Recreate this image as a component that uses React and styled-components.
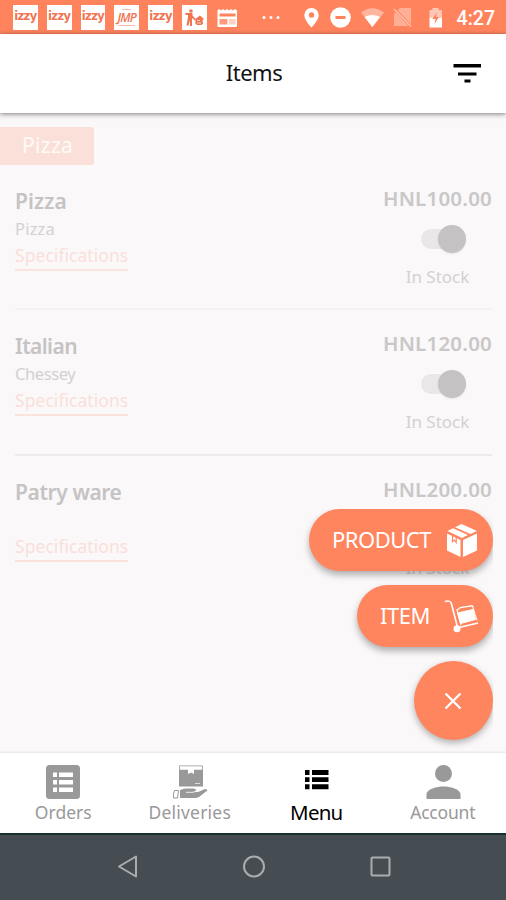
import styled, { createGlobalStyle } from 'styled-components'

const GlobalStyle = createGlobalStyle`
  * {
    box-sizing: border-box;
  }

  body {
    margin: 0;
    font-family: 'Noto Sans', 'Open Sans', sans-serif;
  }
`

const Screen = styled.div`
  position: relative;
  width: 506px;
  height: 900px;
  display: flex;
  flex-direction: column;
  overflow: hidden;
  background: #faf8f9;
`

const StatusBar = styled.div`
  height: 34px;
  flex: none;
  display: flex;
  align-items: center;
  padding: 0 11px 0 13px;
  background: #ff845e;
  color: white;
`

const Notifications = styled.div`
  display: flex;
  align-items: center;
  gap: 9px;
  flex: 1;
`

const AppBadge = styled.div`
  width: 24.8px;
  height: 25px;
  display: flex;
  flex-direction: column;
  align-items: center;
  justify-content: center;
  background: white;
  color: #f07450;
  overflow: hidden;
`

const BadgeText = styled.span`
  font-family: ${props => (props.$italic ? "'Open Sans'" : "'DejaVu Sans'")}, sans-serif;
  font-size: ${props => (props.$italic ? '12px' : '11.5px')};
  font-style: ${props => (props.$italic ? 'italic' : 'normal')};
  font-weight: ${props => (props.$italic ? 600 : 700)};
  line-height: 13px;
  letter-spacing: ${props => (props.$italic ? '-0.8px' : '-0.6px')};
  margin-top: ${props => (props.$italic ? '0' : '-2px')};
`

const BadgeRule = styled.div`
  width: ${props => props.$width};
  height: 1px;
  background: #f9b8a4;
  margin: 1px 0;
`

const StatusIcons = styled.div`
  display: flex;
  align-items: center;
`

const Clock = styled.span`
  font-family: Roboto, sans-serif;
  font-weight: 500;
  font-size: 19.5px;
  line-height: 34px;
  margin-left: 14px;
  padding-top: 3px;
`

const Header = styled.header`
  position: relative;
  height: 79px;
  flex: none;
  display: grid;
  grid-template-columns: 1fr auto 1fr;
  align-items: center;
  padding: 0 25px;
  background: white;
  box-shadow: 0 1px 5px rgba(0, 0, 0, 0.5);
`

const HeaderTitle = styled.h1`
  grid-column: 2;
  margin: 0 0 4px 2px;
  font-size: 22px;
  font-weight: 400;
  line-height: 30px;
  letter-spacing: -0.5px;
  color: #111;
`

const FilterButton = styled.button`
  justify-self: end;
  display: flex;
  border: 0;
  padding: 0;
  background: none;
`

const Content = styled.main`
  flex: 1;
  min-height: 0;
  overflow: hidden;
  padding-top: 14px;
`

const Category = styled.div`
  width: 94px;
  height: 38px;
  padding-left: 22px;
  border-radius: 0 3px 3px 0;
  background: #fbe0d9;
  color: #fffaf6;
  font-size: 21px;
  line-height: 37px;
  letter-spacing: 0.3px;
`

const Item = styled.div`
  height: 145.4px;
  margin: 0 14px 0 15px;
  padding-top: 18px;
  display: flex;
  justify-content: space-between;
  border-bottom: ${props => (props.$last ? '0' : `2px solid ${props.$line}`)};
`

const Details = styled.div`
  display: flex;
  flex-direction: column;
  align-items: flex-start;
  padding-top: 4px;
`

const ItemName = styled.div`
  font-size: 21px;
  font-weight: 600;
  line-height: 28px;
  letter-spacing: ${props => props.$spacing};
  color: #c5c3c4;
`

const Description = styled.div`
  height: 27px;
  font-size: 16.5px;
  line-height: 28px;
  letter-spacing: ${props => props.$spacing};
  color: #d3d1d2;
`

const Specifications = styled.a`
  height: 29px;
  font-size: 17.5px;
  line-height: 27px;
  letter-spacing: 0.05px;
  white-space: nowrap;
  color: #fadfd9;
  border-bottom: 2px solid #fae3dc;
`

const Stock = styled.div`
  width: 110px;
  display: flex;
  flex-direction: column;
  align-items: center;
`

const Price = styled.div`
  align-self: flex-end;
  font-size: 20.5px;
  font-weight: 600;
  line-height: 30px;
  letter-spacing: 0.2px;
  color: #c9c7c8;
`

const Track = styled.div`
  width: 45px;
  height: 20px;
  display: flex;
  align-items: center;
  justify-content: flex-end;
  margin: 16px 0 0 12px;
  border-radius: 10px;
  background: #e9e7e8;
`

const Knob = styled.div`
  width: 28px;
  height: 28px;
  flex: none;
  border-radius: 50%;
  background: #c4c2c3;
  box-shadow: 0 1px 2px rgba(0, 0, 0, 0.08);
`

const StockLabel = styled.div`
  margin: 15px 0 0 1px;
  font-size: 17px;
  line-height: 26px;
  color: #d3d1d2;
`

// Floats above the list, shadows are cut at its right edge
const Actions = styled.div`
  position: absolute;
  right: 13px;
  bottom: 148px;
  width: 200px;
  padding: 0 0 12px;
  display: flex;
  flex-direction: column;
  align-items: flex-end;
  gap: 14px;
  overflow: hidden;
`

const ActionButton = styled.button`
  width: ${props => props.$width}px;
  height: 62px;
  display: flex;
  align-items: center;
  justify-content: space-between;
  padding: 0 14px 0 23px;
  border: 0;
  border-radius: 31px;
  background: #ff855e;
  color: white;
  font: 400 22px/30px 'Noto Sans', sans-serif;
  letter-spacing: -0.5px;
  box-shadow: 0 4px 7px rgba(0, 0, 0, 0.3);
`

const ActionLabel = styled.span`
  margin-bottom: 2px;
`

const CloseButton = styled.button`
  width: 79px;
  height: 79px;
  display: flex;
  align-items: center;
  justify-content: center;
  border: 0;
  padding: 0 2px 0 0;
  border-radius: 50%;
  background: #ff855e;
  box-shadow: 0 3px 7px rgba(0, 0, 0, 0.3);
`

const TabBar = styled.nav`
  height: 80px;
  flex: none;
  display: grid;
  grid-template-columns: repeat(4, 1fr);
  background: white;
  box-shadow: 0 -1px 2px rgba(0, 0, 0, 0.09);
`

const Tab = styled.a`
  display: flex;
  flex-direction: column;
  align-items: center;
  padding-top: 12px;
  color: ${props => (props.$active ? '#000' : '#999')};
`

const TabLabel = styled.span`
  font-size: ${props => (props.$active ? '20.5px' : '17.5px')};
  line-height: 24px;
  margin-top: 1px;
  letter-spacing: ${props => props.$spacing || '0'};
`

const SystemBar = styled.div`
  height: 67px;
  flex: none;
  display: flex;
  justify-content: center;
  gap: 102px;
  padding: 20px 0 0 1px;
  background: #464d52;
  border-top: 2px solid #18302f;
`

const items = [
  {
    name: 'Pizza',
    description: 'Pizza',
    price: 'HNL100.00',
    line: '#f4f2f3',
    nameSpacing: '0.1px',
    descriptionSpacing: '0.2px'
  },
  {
    name: 'Italian',
    description: 'Chessey',
    price: 'HNL120.00',
    line: '#edebec',
    nameSpacing: '-0.6px',
    descriptionSpacing: '-0.4px'
  },
  { name: 'Patry ware', description: '', price: 'HNL200.00', nameSpacing: '-0.4px' }
]

const IzzyBadge = () => (
  <AppBadge>
    <BadgeText>izzy</BadgeText>
  </AppBadge>
)

const CourierIcon = () => (
  <svg width="25" height="25" viewBox="0 0 25 25" fill="#f07450">
    <circle cx="9" cy="6" r="1.800" />
    <path d="M3.500 8h7v2.500l3 3.500-1 1-2.500-2v8H8v-6l-1.500 5.500h-2L6 12V10H3.500z" />
    <path d="M12 15l6-4.500 4 3.500-1.500 1 .5 4-2 1h-4l-2-2 1-2z" />
    <path d="M15 15.500h3M15 18h4" stroke="white" strokeWidth="0.700" />
  </svg>
)

const NewsIcon = () => (
  <svg width="22" height="25" viewBox="-1 -3 22 25">
    <path d="M0.500 2.500l1.500-1.500 2 1.500 2-1.500 2 1.500 2-1.500 2 1.500 2-1.500 2 1.500 2-1.500 2 1.500v15.500q0 1-1 1H1.500q-1 0-1-1z" fill="white" />
    <path d="M2.500 5.500h16v3h-16z" fill="#ff845e" />
    <path d="M2.500 11h8v5.500h-8z" fill="#ff9b7c" />
    <path d="M12 11h6.500v5.500H12z" fill="#ffd0c1" />
  </svg>
)

const StatusGlyphs = () => (
  <svg width="182" height="34" viewBox="261 0 182 34" fill="white">
    <circle cx="264" cy="17.500" r="1.500" />
    <circle cx="271" cy="17.500" r="1.500" />
    <circle cx="278" cy="17.500" r="1.500" />
    <path fillRule="evenodd" d="M311.500 8a7.200 7.200 0 0 0-7.200 7.200c0 5 7.200 12.300 7.200 12.300s7.200-7.300 7.200-12.300a7.200 7.200 0 0 0-7.200-7.200zm0 4.300a2.700 2.700 0 1 1 0 5.400 2.700 2.700 0 0 1 0-5.400z" />
    <circle cx="340.500" cy="17.500" r="10.300" />
    <path d="M335.500 16h10v3h-10z" fill="#ff845e" />
    <path d="M361 12.500q11.500-8.500 23 0l-11.500 14.500z" opacity="0.4" />
    <path d="M364.500 17q8-4 15.500 0l-7.700 10z" />
    <path d="M400 8h11v18h-17V14z" opacity="0.35" />
    <path d="M394 8.500l17 18" stroke="#ff845e" strokeWidth="3" />
    <path d="M394 9l17 17.500" stroke="#ffc0aa" strokeWidth="1.500" />
    <path d="M429.500 10h3V8h6v2h3.500v9h-12.500z" opacity="0.55" />
    <path d="M429.500 18H442v9.500h-12.500z" />
    <path d="M437 12l-4.500 7h3l-1 5 4.500-7h-3z" fill="#ff845e" />
  </svg>
)

const FilterIcon = () => (
  <svg width="28" height="20" viewBox="0 0 28 20" fill="#000">
    <path d="M0.500 0h27.500v3.500H0.500zM5 8.500h18.500v3H5zM11.500 15.500h6v3h-6z" />
  </svg>
)

const BoxIcon = () => (
  <svg width="34" height="36" viewBox="0 0 34 36" fill="white">
    <path d="M2 11.500L15.500 18v17L2 28.500z" />
    <path d="M18 18l14-6.500v17L18 35z" />
    <path d="M2.500 9L8 6.200l15 6.800-6 3z" />
    <path d="M10 5.200L16.500 2 32 9l-6.500 3z" />
    <path d="M7.500 13.500v6l1.700-1.500 2 2.500v-5.500" fill="none" stroke="#ff855e" strokeWidth="1.200" />
  </svg>
)

const TrolleyIcon = () => (
  <svg width="35" height="34" viewBox="0 0 35 34" fill="none" stroke="white">
    <path d="M1 2.500q5-1.500 6.200 1.500l6 23" strokeWidth="1.600" />
    <path d="M15 28.500l19-4.500" strokeWidth="1.600" />
    <circle cx="13" cy="29.800" r="3.500" fill="white" stroke="none" />
    <path d="M13.500 14l15.500-3.500 2.500 10-15 4z" fill="white" strokeWidth="1" />
    <path d="M12.500 11.500l4-3 11.500-1.700 1.500 1.700" strokeWidth="1.300" />
    <path d="M13 10.500l4 16M29 8.500l4 13" strokeWidth="1" />
  </svg>
)

const OrdersIcon = () => (
  <svg width="34" height="34" viewBox="0 0 34 34">
    <rect width="34" height="34" rx="3.500" fill="#999" />
    <path
      d="M7 7.500h4v4.500H7zM13 7.500h14v4.500H13zM7 15h4v4.500H7zM13 15h14v4.500H13zM7 22.500h4V27H7zM13 22.500h14V27H13z"
      fill="white"
    />
  </svg>
)

const DeliveriesIcon = () => (
  <svg width="36" height="34" viewBox="0 0 36 34">
    <rect x="7" y="0.500" width="24" height="21" fill="#999" />
    <path d="M7.800 1.300h22.400v3.500H22V9l-3-1.500L16 9V4.800H7.800z" fill="white" />
    <path d="M23 18h5v1h-5z" fill="#ddd" />
    <path d="M8 25l5-1.500h8q3 0 3 1.500 0 1.500-3 1.700l5 .3 7-3q3 0 2 1.800L27 32q-2 1-4 1H8z" fill="#999" />
    <path d="M14 27.300h7q2 0 2.500-1.500" fill="none" stroke="white" strokeWidth="0.800" />
    <path d="M2.500 25.500h4l-1 7.500h-4q-.5-4 1-7.500z" fill="white" stroke="#999" strokeWidth="1" />
  </svg>
)

const MenuIcon = () => (
  <svg width="36" height="34" viewBox="0 0 36 34">
    <path d="M7 5h4.500v5H7zM14 5h16.500v5H14zM7 12.300h4.500v4.700H7zM14 12.300h16.500v4.700H14zM7 19.300h4.500v5H7zM14 19.300h16.500v5H14z" />
  </svg>
)

const AccountIcon = () => (
  <svg width="36" height="34" viewBox="0 0 36 34" fill="#999">
    <circle cx="18.500" cy="8.500" r="8.500" />
    <path d="M1.500 34v-4.500C1.500 24 12 21.500 18.500 21.500S35.500 24 35.500 29.500V34z" />
  </svg>
)

const tabs = [
  { label: 'Orders', icon: <OrdersIcon /> },
  { label: 'Deliveries', icon: <DeliveriesIcon />, spacing: '0.2px' },
  { label: 'Menu', icon: <MenuIcon />, active: true, spacing: '-0.8px' },
  { label: 'Account', icon: <AccountIcon />, spacing: '-0.2px' }
]

export default function App() {
  return (
    <Screen>
      <GlobalStyle />
      <StatusBar>
        <Notifications>
          <IzzyBadge />
          <IzzyBadge />
          <IzzyBadge />
          <AppBadge>
            <BadgeRule $width="9px" />
            <BadgeText $italic>JMP</BadgeText>
            <BadgeRule $width="17px" />
          </AppBadge>
          <IzzyBadge />
          <AppBadge>
            <CourierIcon />
          </AppBadge>
          <NewsIcon />
        </Notifications>
        <StatusIcons>
          <StatusGlyphs />
          <Clock>4:27</Clock>
        </StatusIcons>
      </StatusBar>

      <Header>
        <HeaderTitle>Items</HeaderTitle>
        <FilterButton>
          <FilterIcon />
        </FilterButton>
      </Header>

      <Content>
        <Category>Pizza</Category>
        {items.map((item, index) => (
          <Item key={item.name} $line={item.line} $last={index === items.length - 1}>
            <Details>
              <ItemName $spacing={item.nameSpacing}>{item.name}</ItemName>
              <Description $spacing={item.descriptionSpacing}>{item.description}</Description>
              <Specifications>Specifications</Specifications>
            </Details>
            <Stock>
              <Price>{item.price}</Price>
              <Track>
                <Knob />
              </Track>
              <StockLabel>In Stock</StockLabel>
            </Stock>
          </Item>
        ))}
      </Content>

      <TabBar>
        {tabs.map(tab => (
          <Tab key={tab.label} $active={tab.active}>
            {tab.icon}
            <TabLabel $active={tab.active} $spacing={tab.spacing}>{tab.label}</TabLabel>
          </Tab>
        ))}
      </TabBar>

      <SystemBar>
        <svg width="24" height="24" viewBox="0 0 24 24" fill="none" stroke="#a9adaf" strokeWidth="2">
          <path d="M20 1.500v20L3 11.500z" strokeLinejoin="round" />
        </svg>
        <svg width="24" height="24" viewBox="0 0 24 24" fill="none" stroke="#a9adaf" strokeWidth="2">
          <circle cx="12" cy="11.500" r="10" />
        </svg>
        <svg width="24" height="24" viewBox="0 0 24 24" fill="none" stroke="#a9adaf" strokeWidth="2">
          <rect x="3.500" y="2.500" width="18" height="18" rx="1" />
        </svg>
      </SystemBar>

      <Actions>
        <ActionButton $width={184}>
          <ActionLabel>PRODUCT</ActionLabel>
          <BoxIcon />
        </ActionButton>
        <ActionButton $width={136}>
          <ActionLabel>ITEM</ActionLabel>
          <TrolleyIcon />
        </ActionButton>
        <CloseButton>
          <svg width="18" height="18" viewBox="0 0 18 18" stroke="white" strokeWidth="2.300">
            <path d="M1.500 1.500l15 15M16.500 1.500l-15 15" />
          </svg>
        </CloseButton>
      </Actions>
    </Screen>
  )
}
